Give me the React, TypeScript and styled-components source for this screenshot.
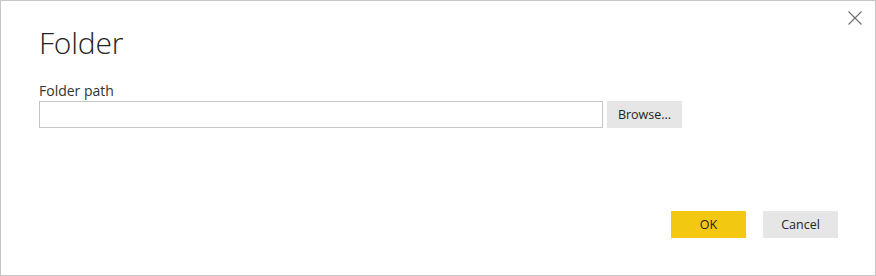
import React from 'react';
import styled, { createGlobalStyle } from 'styled-components';

const GlobalStyle = createGlobalStyle`
  html, body {
    margin: 0;
    padding: 0;
    background: #ffffff;
  }
  body {
    font-family: 'Open Sans', 'Noto Sans', sans-serif;
  }
`;

const Dialog = styled.div`
  box-sizing: border-box;
  width: 876px;
  height: 276px;
  border: 1px solid #c6c6c6;
  background: #ffffff;
  position: relative;
  display: flex;
  flex-direction: column;
  padding: 21px 37px 0 38px;
`;

const CloseButton = styled.button`
  position: absolute;
  top: 9px;
  right: 12px;
  width: 16px;
  height: 16px;
  padding: 0;
  border: none;
  background: transparent;
  cursor: pointer;
  display: flex;
  align-items: center;
  justify-content: center;
`;

const Title = styled.h1`
  margin: 0;
  font-size: 30px;
  font-weight: 300;
  line-height: 42px;
  color: #252423;
  letter-spacing: -0.2px;
`;

const FieldLabel = styled.label`
  display: block;
  margin-top: 17px;
  font-size: 14px;
  line-height: 20px;
  color: #333333;
`;

const FieldRow = styled.div`
  display: flex;
  align-items: stretch;
  gap: 4px;
`;

const TextInput = styled.input`
  box-sizing: border-box;
  width: 564px;
  height: 27px;
  border: 1px solid #c6c6c6;
  padding: 0 6px;
  font-family: inherit;
  font-size: 13px;
  outline: none;
`;

const Button = styled.button<{ $primary?: boolean }>`
  box-sizing: border-box;
  width: 75px;
  height: 27px;
  border: none;
  padding: 0;
  font-family: inherit;
  font-size: 12.5px;
  color: #252423;
  background: ${p => (p.$primary ? '#f2c811' : '#e6e6e6')};
  cursor: pointer;
`;

const Footer = styled.div`
  display: flex;
  justify-content: flex-end;
  gap: 17px;
  margin-top: auto;
  margin-bottom: 37px;
`;

export default function App() {
  return (
    <>
      <GlobalStyle />
      <Dialog>
        <CloseButton aria-label="Close">
          <svg width="14" height="14" viewBox="0 0 14 14">
            <path d="M0.5 0.5 L13.5 13.5 M13.5 0.5 L0.5 13.5" stroke="#6e6e6e" strokeWidth="1.1" fill="none" />
          </svg>
        </CloseButton>
        <Title>Folder</Title>
        <FieldLabel htmlFor="folder-path">Folder path</FieldLabel>
        <FieldRow>
          <TextInput id="folder-path" type="text" />
          <Button>Browse...</Button>
        </FieldRow>
        <Footer>
          <Button $primary>OK</Button>
          <Button>Cancel</Button>
        </Footer>
      </Dialog>
    </>
  );
}
